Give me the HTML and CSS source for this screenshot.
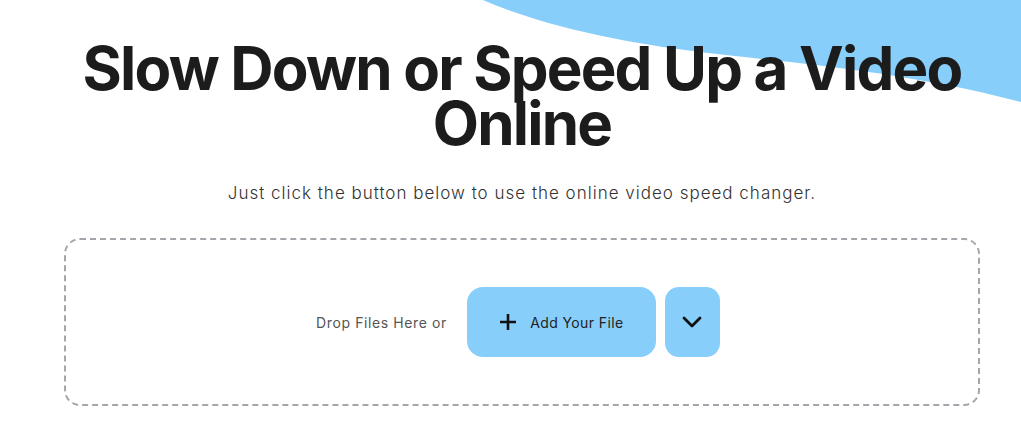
FILE: index.html
```html
<!DOCTYPE html>
<html lang="en">
<head>
  <meta charset="UTF-8" />
  <title>Video Speed Changer</title>
  <link rel="stylesheet" href="styles.css">
</head>
<body>

  <svg class="blob" width="1021" height="110" viewBox="0 0 1021 110">
    <path d="M483 0 C540 25 620 42 700 52 S900 70 1021 102 L1021 0 Z" fill="#87cefb"/>
  </svg>

  <div class="wrap">
    <h1>Slow Down or Speed Up a Video<br>Online</h1>
    <p class="sub">Just click the button below to use the online video speed changer.</p>

    <div class="drop">
      <span class="drop-text">Drop Files Here or</span>
      <button class="btn add">
        <svg width="18" height="18" viewBox="0 0 18 18"><path d="M9 1v16M1 9h16" stroke="#111" stroke-width="2.6"/></svg>
        Add Your File
      </button>
      <button class="btn more">
        <svg width="20" height="12" viewBox="0 0 20 12"><path d="M2 2l8 8 8-8" fill="none" stroke="#111" stroke-width="2.8" stroke-linecap="round" stroke-linejoin="round"/></svg>
      </button>
    </div>
  </div>

</body>
</html>
```

FILE: styles.css
```css
body{margin:0;background:#fff;font-family:Inter, "Noto Sans", sans-serif;color:#1c1c1c;overflow:hidden;}
.blob{position:absolute;top:0;left:0;z-index:0;}
.wrap{position:relative;z-index:1;padding:41px 41px 0 64px;text-align:center;}
h1{margin:0;font-size:60px;line-height:55px;font-weight:700;letter-spacing:-1.8px;white-space:nowrap;}
.sub{margin:30px 0 0;font-size:17px;line-height:24px;font-weight:300;color:#333;letter-spacing:1px;}
.drop{margin-top:33px;height:164px;padding-right:8px;border:2px dashed #a3a7ab;border-radius:16px;display:flex;align-items:center;justify-content:center;}
.drop-text{font-size:14px;color:#555;margin-right:20px;letter-spacing:0.6px;}
.btn{border:none;background:#87cefb;cursor:pointer;font-family:inherit;display:flex;align-items:center;justify-content:center;}
.add{width:189px;height:70px;border-radius:16px;font-size:14px;color:#222;gap:13px;letter-spacing:0.4px;}
.more{width:55px;height:70px;border-radius:14px;margin-left:9px;}
```
